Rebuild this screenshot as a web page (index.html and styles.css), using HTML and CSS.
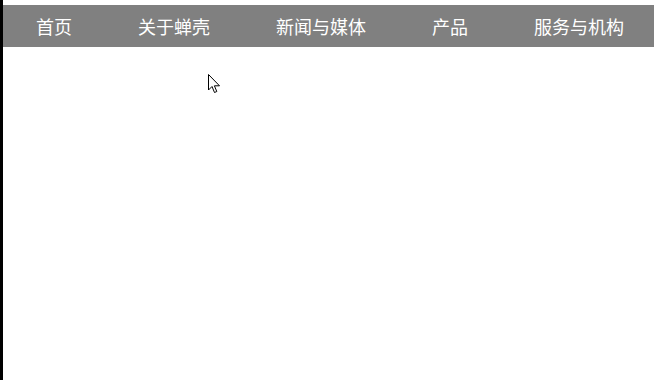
FILE: index.html
```html
<!DOCTYPE html>
<html lang="zh-CN">
<head>
  <meta charset="UTF-8">
  <title>蝉壳</title>
  <link rel="stylesheet" href="styles.css">
</head>
<body>
  <div class="page">
    <ul class="nav">
      <li><a href="#">首页</a></li>
      <li><a href="#">关于蝉壳</a></li>
      <li><a href="#">新闻与媒体</a></li>
      <li><a href="#">产品</a></li>
      <li><a href="#">服务与机构</a></li>
    </ul>
  </div>

  <svg class="cursor" width="13" height="20" viewBox="0 0 13 20">
    <path d="M0.5 0.5 L0.5 16 L4 12.5 L6.5 18.5 L8.8 17.5 L6.4 11.8 L11.5 11.8 Z" fill="#fff" stroke="#000" stroke-width="1"/>
  </svg>
</body>
</html>
```

FILE: styles.css
```css
* {
  box-sizing: border-box;
}

body {
  margin: 0;
  padding: 0;
  font-family: "Noto Sans CJK SC", "Noto Sans", sans-serif;
  background: #fff;
  overflow: hidden;
}

.page {
  min-height: 100vh;
  border-left: 3px solid #000;
  padding-top: 5px;
}

.nav {
  list-style: none;
  margin: 0;
  padding: 0;
  display: flex;
  height: 42px;
  align-items: center;
  background-color: #808080;
  overflow: hidden;
}

.nav li {
  flex-shrink: 0;
  padding: 0 33px;
  white-space: nowrap;
}

.nav a {
  color: #fff;
  text-decoration: none;
  font-size: 18px;
  line-height: 42px;
  display: block;
}

.cursor {
  position: absolute;
  left: 208px;
  top: 74px;
}
```
